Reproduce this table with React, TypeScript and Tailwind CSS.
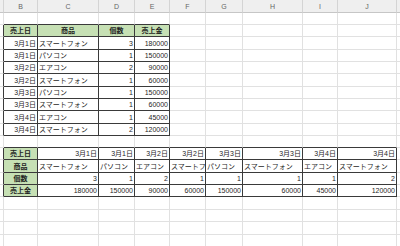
import React from 'react';

type Cell = { text: string; align?: 'left' | 'right' | 'center'; bold?: boolean; fill?: boolean };

// column widths: A(sliver) B C D E F G H I J K
const colWidths = [4, 34, 61, 36, 35, 36, 37, 60, 35, 59, 20];
const colNames = ['', 'B', 'C', 'D', 'E', 'F', 'G', 'H', 'I', 'J', ''];
// row heights for rows 1..19
const rowHeights = [12, 12, 13, 12, 12, 13, 12, 12, 13, 12, 12, 12, 13, 12, 12, 13, 12, 13, 12];

const sales = [
  ['3月1日', 'スマートフォン', '3', '180000'],
  ['3月1日', 'パソコン', '1', '150000'],
  ['3月2日', 'エアコン', '2', '90000'],
  ['3月2日', 'スマートフォン', '1', '60000'],
  ['3月3日', 'パソコン', '1', '150000'],
  ['3月3日', 'スマートフォン', '1', '60000'],
  ['3月4日', 'エアコン', '1', '45000'],
  ['3月4日', 'スマートフォン', '2', '120000'],
];
const headers = ['売上日', '商品', '個数', '売上金'];

function buildCells() {
  const cells: Record<string, Cell> = {};
  // vertical table at B2:E10
  headers.forEach((h, i) => {
    cells[`2,${i + 1}`] = { text: h, align: 'center', bold: true, fill: true };
  });
  sales.forEach((row, r) => {
    row.forEach((v, i) => {
      cells[`${r + 3},${i + 1}`] = { text: v, align: i === 1 ? 'left' : 'right' };
    });
  });
  // transposed table at B12:J15
  headers.forEach((h, i) => {
    cells[`${12 + i},1`] = { text: h, align: 'center', bold: true, fill: true };
  });
  sales.forEach((row, c) => {
    row.forEach((v, i) => {
      cells[`${12 + i},${c + 2}`] = { text: v, align: i === 1 ? 'left' : 'right' };
    });
  });
  return cells;
}

const cells = buildCells();

function inTable(r: number, c: number) {
  if (r >= 2 && r <= 10 && c >= 1 && c <= 4) return true;
  if (r >= 12 && r <= 15 && c >= 1 && c <= 9) return true;
  return false;
}

function clsx(...parts: (string | false | undefined)[]) {
  return parts.filter(Boolean).join(' ');
}

function SheetCell({ r, c }: { r: number; c: number }) {
  const cell = cells[`${r},${c}`];
  const darkRight = inTable(r, c) || inTable(r, c + 1);
  const darkBottom = inTable(r, c) || inTable(r + 1, c);
  return (
    <div
      className={clsx(
        'flex h-full w-full items-center overflow-hidden whitespace-nowrap border-r border-b px-[1px] text-[7px] leading-none text-[#1f1f1f]',
        darkRight ? 'border-r-[#3a3a3a]' : 'border-r-[#e1e1e1]',
        darkBottom ? 'border-b-[#3a3a3a]' : 'border-b-[#e1e1e1]',
        cell?.fill ? 'bg-[#c6e0b4]' : 'bg-white',
        cell?.bold && 'font-bold',
        cell?.align === 'right' && 'justify-end',
        cell?.align === 'center' && 'justify-center',
      )}
    >
      {cell?.text}
    </div>
  );
}

export default function App() {
  return (
    <div
      className="h-[246px] w-[400px] overflow-hidden bg-white"
      style={{ fontFamily: '"Liberation Sans", "Noto Sans CJK JP", sans-serif' }}
    >
      <div className="flex w-max">
        {colWidths.map((w, c) => (
          <div key={c} className="flex shrink-0 flex-col" style={{ width: w }}>
            {/* column header */}
            <div className="flex h-[13px] items-center justify-center border-r border-b border-r-[#d4d4d4] border-b-[#c6c6c6] bg-[#efefef] text-[7px] leading-none text-[#666]">
              {colNames[c]}
            </div>
            {rowHeights.map((h, i) => (
              <div key={i} className="flex" style={{ height: h }}>
                <SheetCell r={i + 1} c={c} />
              </div>
            ))}
          </div>
        ))}
      </div>
    </div>
  );
}
